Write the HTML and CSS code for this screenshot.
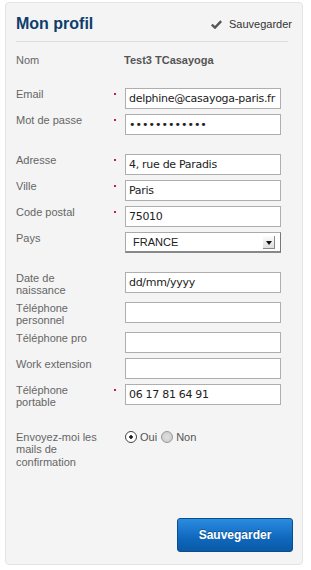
FILE: index.html
```html
<!DOCTYPE html>
<html lang="fr">
<head>
  <meta charset="UTF-8">
  <meta name="viewport" content="width=device-width, initial-scale=1.0">
  <title>Mon profil</title>
  <link rel="stylesheet" href="styles.css">
</head>
<body>
  <form class="panel" name="profil" method="POST">
    <div class="panel-head">
      <h1>Mon profil</h1>
      <a class="head-save" href="#">
        <svg width="11" height="9" viewBox="0 0 11 9"><path d="M0.8 4.6 L4 7.6 L10.2 1.2" fill="none" stroke="#555" stroke-width="2.4"/></svg>
        Sauvegarder
      </a>
    </div>

    <div class="row row-name">
      <span class="label">Nom</span>
      <span class="mark"></span>
      <span class="value">Test3 TCasayoga</span>
    </div>

    <div class="group">
      <div class="row">
        <label class="label" for="email">Email</label>
        <span class="mark"><i></i></span>
        <input type="text" id="email" name="email" value="delphine@casayoga-paris.fr">
      </div>
      <div class="row">
        <label class="label" for="password">Mot de passe</label>
        <span class="mark"><i></i></span>
        <input type="password" id="password" name="password" value="motdepasse12">
      </div>
    </div>

    <div class="group">
      <div class="row">
        <label class="label" for="address">Adresse</label>
        <span class="mark"><i></i></span>
        <input type="text" id="address" name="address" value="4, rue de Paradis">
      </div>
      <div class="row">
        <label class="label" for="city">Ville</label>
        <span class="mark"><i></i></span>
        <input type="text" id="city" name="city" value="Paris">
      </div>
      <div class="row">
        <label class="label" for="zip">Code postal</label>
        <span class="mark"><i></i></span>
        <input type="text" id="zip" name="zip" value="75010">
      </div>
      <div class="row">
        <label class="label" for="country">Pays</label>
        <span class="mark"></span>
        <div class="select">
          <select id="country" name="country">
            <option value="FR">FRANCE</option>
            <option value="BE">BELGIQUE</option>
            <option value="CH">SUISSE</option>
          </select>
          <span class="select-arrow"></span>
        </div>
      </div>
    </div>

    <div class="group group-phones">
      <div class="row">
        <label class="label" for="birth">Date de naissance</label>
        <span class="mark"></span>
        <input type="text" id="birth" name="birth" value="dd/mm/yyyy">
      </div>
      <div class="row">
        <label class="label" for="phone">Téléphone personnel</label>
        <span class="mark"></span>
        <input type="text" id="phone" name="phone">
      </div>
      <div class="row">
        <label class="label" for="phonePro">Téléphone pro</label>
        <span class="mark"></span>
        <input type="text" id="phonePro" name="phonePro">
      </div>
      <div class="row">
        <label class="label" for="workExt">Work extension</label>
        <span class="mark"></span>
        <input type="text" id="workExt" name="workExt">
      </div>
      <div class="row">
        <label class="label" for="mobile">Téléphone portable</label>
        <span class="mark"><i></i></span>
        <input type="text" id="mobile" name="mobile" value="06 17 81 64 91">
      </div>
    </div>

    <div class="row row-radio">
      <span class="label">Envoyez-moi les mails de confirmation</span>
      <span class="mark"></span>
      <div class="radios">
        <label><input type="radio" name="mails" value="oui" checked> Oui</label>
        <label><input type="radio" name="mails" value="non"> Non</label>
      </div>
    </div>

    <div class="actions">
      <button type="submit">Sauvegarder</button>
    </div>
  </form>
</body>
</html>
```

FILE: styles.css
```css
body {
  margin: 0;
  background: #fff;
  font-family: "Liberation Sans", Arial, sans-serif;
}
.panel {
  box-sizing: border-box;
  width: 298px;
  margin: 2px 0 0 5px;
  padding: 0 0 12px 10px;
  background: #f4f4f4;
  border: 1px solid #e4e4e4;
  border-radius: 4px;
}
.panel-head {
  display: flex;
  justify-content: space-between;
  align-items: center;
  margin-right: 14px;
  padding: 12px 0 8px;
  border-bottom: 1px solid #dcdcdc;
}
h1 {
  margin: 0;
  font-size: 16px;
  line-height: 18px;
  color: #0d3d6e;
}
.head-save {
  display: flex;
  align-items: center;
  gap: 7px;
  font-size: 11px;
  color: #333;
  text-decoration: none;
  margin-right: -4px;
}
.row {
  display: grid;
  grid-template-columns: 85px 24px 156px;
  margin-bottom: 5px;
}
.label {
  font-size: 11px;
  line-height: 12.5px;
  color: #666;
}
.mark i {
  display: block;
  width: 2px;
  height: 2px;
  margin: 5px 0 0 13px;
  background: #c41f3b;
}
.row-name {
  margin: 12px 0 21px;
}
.value {
  margin-left: -1px;
  font-size: 11px;
  font-weight: bold;
  line-height: 12px;
  color: #555;
}
.group {
  margin-bottom: 19px;
}
.group .row:last-child {
  margin-bottom: 0;
}
.group-phones {
  margin-bottom: 22px;
}
input[type="text"],
input[type="password"] {
  box-sizing: border-box;
  width: 156px;
  height: 21px;
  margin: 0;
  padding: 0 3px;
  border: 1px solid #aeaeae;
  background: #fff;
  font-family: "DejaVu Sans", Verdana, sans-serif;
  font-size: 11px;
  letter-spacing: -0.3px;
  color: #222;
}
input[type="password"] {
  letter-spacing: 0;
}
.select {
  position: relative;
  width: 156px;
  height: 21px;
}
.select select {
  appearance: none;
  box-sizing: border-box;
  width: 100%;
  height: 100%;
  margin: 0;
  padding: 0 0 0 7px;
  border: 1px solid #aaa;
  border-right-color: #777;
  border-bottom: 2px solid #888;
  border-radius: 0;
  background: #fff;
  font-family: "Liberation Sans", Arial, sans-serif;
  font-size: 11px;
  color: #222;
}
.select-arrow {
  position: absolute;
  top: 4px;
  right: 6px;
  width: 11px;
  height: 12px;
  background: linear-gradient(#fdfdfd, #dedede);
  border-right: 1px solid #888;
  border-bottom: 1px solid #888;
  pointer-events: none;
}
.select-arrow::after {
  content: "";
  position: absolute;
  left: 3px;
  top: 5px;
  border-left: 3px solid transparent;
  border-right: 3px solid transparent;
  border-top: 4px solid #111;
}
.row-radio {
  margin: 0;
}
.radios {
  display: flex;
  gap: 4px;
}
.radios label {
  display: flex;
  align-items: flex-start;
  gap: 3px;
  font-size: 11px;
  line-height: 12px;
  color: #555;
}
.radios input {
  appearance: none;
  box-sizing: border-box;
  width: 12px;
  height: 12px;
  margin: 0;
  border: 1px solid #999;
  border-radius: 50%;
  background: radial-gradient(#e0e0e0, #c8c8c8);
}
.radios input:checked {
  border-color: #444;
  background: radial-gradient(circle, #222 0, #222 1.5px, #fff 2px);
}
.actions {
  display: flex;
  justify-content: flex-end;
  margin: 50px 9px 0 0;
}
button {
  width: 116px;
  height: 34px;
  border: 1px solid #0a4d8f;
  border-radius: 3px;
  background: linear-gradient(#2b8ce0, #0f68bd 60%, #0a59a6);
  font-family: "Liberation Sans", Arial, sans-serif;
  font-size: 12px;
  font-weight: bold;
  color: #fff;
  text-shadow: 0 -1px 0 rgba(0, 0, 0, 0.3);
  cursor: pointer;
}
```
